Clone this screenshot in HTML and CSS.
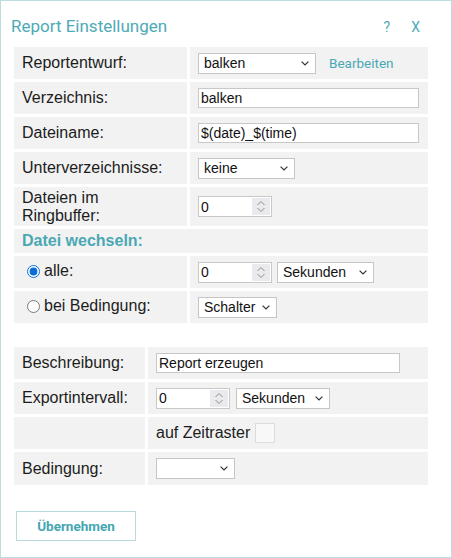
FILE: index.html
```html
<!DOCTYPE html>
<html lang="de">
<head>
<meta charset="utf-8">
<title>Report Einstellungen</title>
<link rel="stylesheet" href="styles.css">
</head>
<body>
<div class="dialog">
  <div class="header">
    <span class="title">Report Einstellungen</span>
    <span class="tools"><span class="tool">?</span><span class="tool">X</span></span>
  </div>

  <table class="form form-main">
    <tr class="row">
      <td class="lbl lbl-main">Reportentwurf:</td>
      <td class="val val-main">
        <span class="sel sel-report"><select><option>balken</option></select><svg class="chev" width="8" height="5" viewBox="0 0 8 5"><polyline points="0.6,0.6 4,4 7.4,0.6"/></svg></span>
        <a class="link">Bearbeiten</a>
      </td>
    </tr>
    <tr class="row">
      <td class="lbl">Verzeichnis:</td>
      <td class="val"><input class="txt txt-main" type="text" value="balken"></td>
    </tr>
    <tr class="row">
      <td class="lbl">Dateiname:</td>
      <td class="val"><input class="txt txt-main" type="text" value="$(date)_$(time)"></td>
    </tr>
    <tr class="row">
      <td class="lbl">Unterverzeichnisse:</td>
      <td class="val"><span class="sel sel-sub"><select><option>keine</option></select><svg class="chev" width="8" height="5" viewBox="0 0 8 5"><polyline points="0.6,0.6 4,4 7.4,0.6"/></svg></span></td>
    </tr>
    <tr class="row row-tall">
      <td class="lbl">Dateien im<br>Ringbuffer:</td>
      <td class="val"><span class="num"><input type="text" value="0"><svg class="spin" width="18" height="17" viewBox="0 0 18 17"><polyline points="5.5,7 9,3.5 12.5,7"/><polyline points="5.5,10 9,13.5 12.5,10"/></svg></span></td>
    </tr>
    <tr class="row-section">
      <td class="section" colspan="2">Datei wechseln:</td>
    </tr>
    <tr class="row">
      <td class="lbl"><label class="radio"><input type="radio" name="wechsel" checked>alle:</label></td>
      <td class="val">
        <span class="num"><input type="text" value="0"><svg class="spin" width="18" height="17" viewBox="0 0 18 17"><polyline points="5.5,7 9,3.5 12.5,7"/><polyline points="5.5,10 9,13.5 12.5,10"/></svg></span>
        <span class="sel sel-unit"><select><option>Sekunden</option></select><svg class="chev" width="8" height="5" viewBox="0 0 8 5"><polyline points="0.6,0.6 4,4 7.4,0.6"/></svg></span>
      </td>
    </tr>
    <tr class="row">
      <td class="lbl"><label class="radio"><input type="radio" name="wechsel">bei Bedingung:</label></td>
      <td class="val"><span class="sel sel-switch"><select><option>Schalter</option></select><svg class="chev" width="8" height="5" viewBox="0 0 8 5"><polyline points="0.6,0.6 4,4 7.4,0.6"/></svg></span></td>
    </tr>
  </table>

  <table class="form form-export">
    <tr class="row">
      <td class="lbl lbl-export">Beschreibung:</td>
      <td class="val val-export"><input class="txt txt-desc" type="text" value="Report erzeugen"></td>
    </tr>
    <tr class="row">
      <td class="lbl">Exportintervall:</td>
      <td class="val">
        <span class="num"><input type="text" value="0"><svg class="spin" width="18" height="17" viewBox="0 0 18 17"><polyline points="5.5,7 9,3.5 12.5,7"/><polyline points="5.5,10 9,13.5 12.5,10"/></svg></span>
        <span class="sel sel-unit2"><select><option>Sekunden</option></select><svg class="chev" width="8" height="5" viewBox="0 0 8 5"><polyline points="0.6,0.6 4,4 7.4,0.6"/></svg></span>
      </td>
    </tr>
    <tr class="row">
      <td class="lbl"></td>
      <td class="val"><span class="plain">auf Zeitraster</span><input class="check" type="checkbox"></td>
    </tr>
    <tr class="row row-last">
      <td class="lbl">Bedingung:</td>
      <td class="val"><span class="sel sel-cond"><select><option></option></select><svg class="chev" width="8" height="5" viewBox="0 0 8 5"><polyline points="0.6,0.6 4,4 7.4,0.6"/></svg></span></td>
    </tr>
  </table>

  <button class="apply" type="button">Übernehmen</button>
</div>
</body>
</html>
```

FILE: styles.css
```css
* { box-sizing: border-box; }

html, body {
  margin: 0;
  padding: 0;
  background: #ffffff;
}

.dialog {
  width: 452px;
  height: 558px;
  border: 1px solid #bcdde0;
  background: #ffffff;
  font-family: "Liberation Sans", Arial, sans-serif;
  color: #1c1c1c;
}

.header {
  height: 43px;
  display: flex;
  align-items: baseline;
  padding: 15px 31px 0 10px;
}

.title {
  font-family: Roboto, "Open Sans", sans-serif;
  font-size: 17px;
  line-height: 20px;
  color: #4eaab6;
}

.tools {
  margin-left: auto;
  display: flex;
  gap: 21px;
}

.tool {
  font-family: Roboto, "Open Sans", sans-serif;
  font-size: 14px;
  line-height: 20px;
  color: #4eaab6;
}

.form {
  border-collapse: separate;
  border-spacing: 3px;
  width: 420px;
  margin-left: 10px;
  table-layout: fixed;
}

.form-export {
  margin-top: 18px;
}

.row td { height: 32px; }
.row-tall td { height: 39px; }
.row-section td { height: 24px; }
.row-last td { height: 33px; }

.lbl, .val, .section {
  background: #f2f2f2;
  padding: 0 8px;
  vertical-align: middle;
  font-size: 16px;
  line-height: 18px;
}

.lbl-main { width: 173px; }
.lbl-export { width: 131px; }

.section {
  font-weight: bold;
  color: #4aa8b4;
}

.val {
  white-space: nowrap;
  font-size: 0;
}

.sel, .num, .link, .plain, .check, .txt {
  vertical-align: middle;
}

.sel {
  position: relative;
  display: inline-block;
  height: 21px;
}

.sel select {
  appearance: none;
  -webkit-appearance: none;
  width: 100%;
  height: 21px;
  margin: 0;
  border: 1px solid #c6c6c6;
  border-radius: 0;
  background: #ffffff;
  padding: 0 0 0 5px;
  font-family: "Liberation Sans", Arial, sans-serif;
  font-size: 14px;
  color: #111111;
  outline: none;
}

.chev {
  position: absolute;
  right: 7px;
  top: 8px;
  fill: none;
  stroke: #333333;
  stroke-width: 1.2;
}

.sel-report { width: 118px; }
.sel-sub { width: 97px; }
.sel-unit { width: 97px; margin-left: 5px; }
.sel-switch { width: 79px; }
.sel-unit2 { width: 94px; margin-left: 6px; }
.sel-cond { width: 79px; }

.link {
  display: inline-block;
  margin-left: 13px;
  font-family: Roboto, "Open Sans", sans-serif;
  font-size: 13.5px;
  color: #4aa8b4;
  cursor: pointer;
}

.txt {
  height: 20px;
  margin: 0;
  border: 1px solid #c8c8c8;
  border-radius: 0;
  padding: 0 2px;
  font-family: "Liberation Sans", Arial, sans-serif;
  font-size: 14px;
  color: #111111;
  background: #ffffff;
  outline: none;
}

.txt-main { width: 221px; }
.txt-desc { width: 244px; }

.num {
  position: relative;
  display: inline-block;
  width: 74px;
  height: 21px;
}

.num input {
  width: 100%;
  height: 21px;
  margin: 0;
  border: 1px solid #c8c8c8;
  border-radius: 0;
  padding: 0 2px;
  font-family: "Liberation Sans", Arial, sans-serif;
  font-size: 14px;
  color: #111111;
  background: #ffffff;
  outline: none;
}

.spin {
  position: absolute;
  right: 2px;
  top: 2px;
  background: #e9e9ee;
  fill: none;
  stroke: #8f8f8f;
  stroke-width: 1;
}

.radio {
  display: inline-flex;
  align-items: center;
  font-size: 16px;
}

.radio input {
  margin: 0 4px 0 5px;
  width: 13px;
  height: 13px;
  accent-color: #0b6bd9;
}

.plain {
  font-size: 16px;
}

.check {
  appearance: none;
  -webkit-appearance: none;
  width: 20px;
  height: 20px;
  margin: 0 0 0 5px;
  border: 1px solid #dcdcdc;
  background: #f8f8f8;
  border-radius: 0;
}

.apply {
  display: block;
  margin: 23px 0 0 15px;
  width: 120px;
  height: 30px;
  border: 1px solid #b9dbde;
  background: #ffffff;
  font-family: Roboto, "Open Sans", sans-serif;
  font-weight: bold;
  font-size: 13.5px;
  color: #45a6b2;
  padding: 0;
}
```
